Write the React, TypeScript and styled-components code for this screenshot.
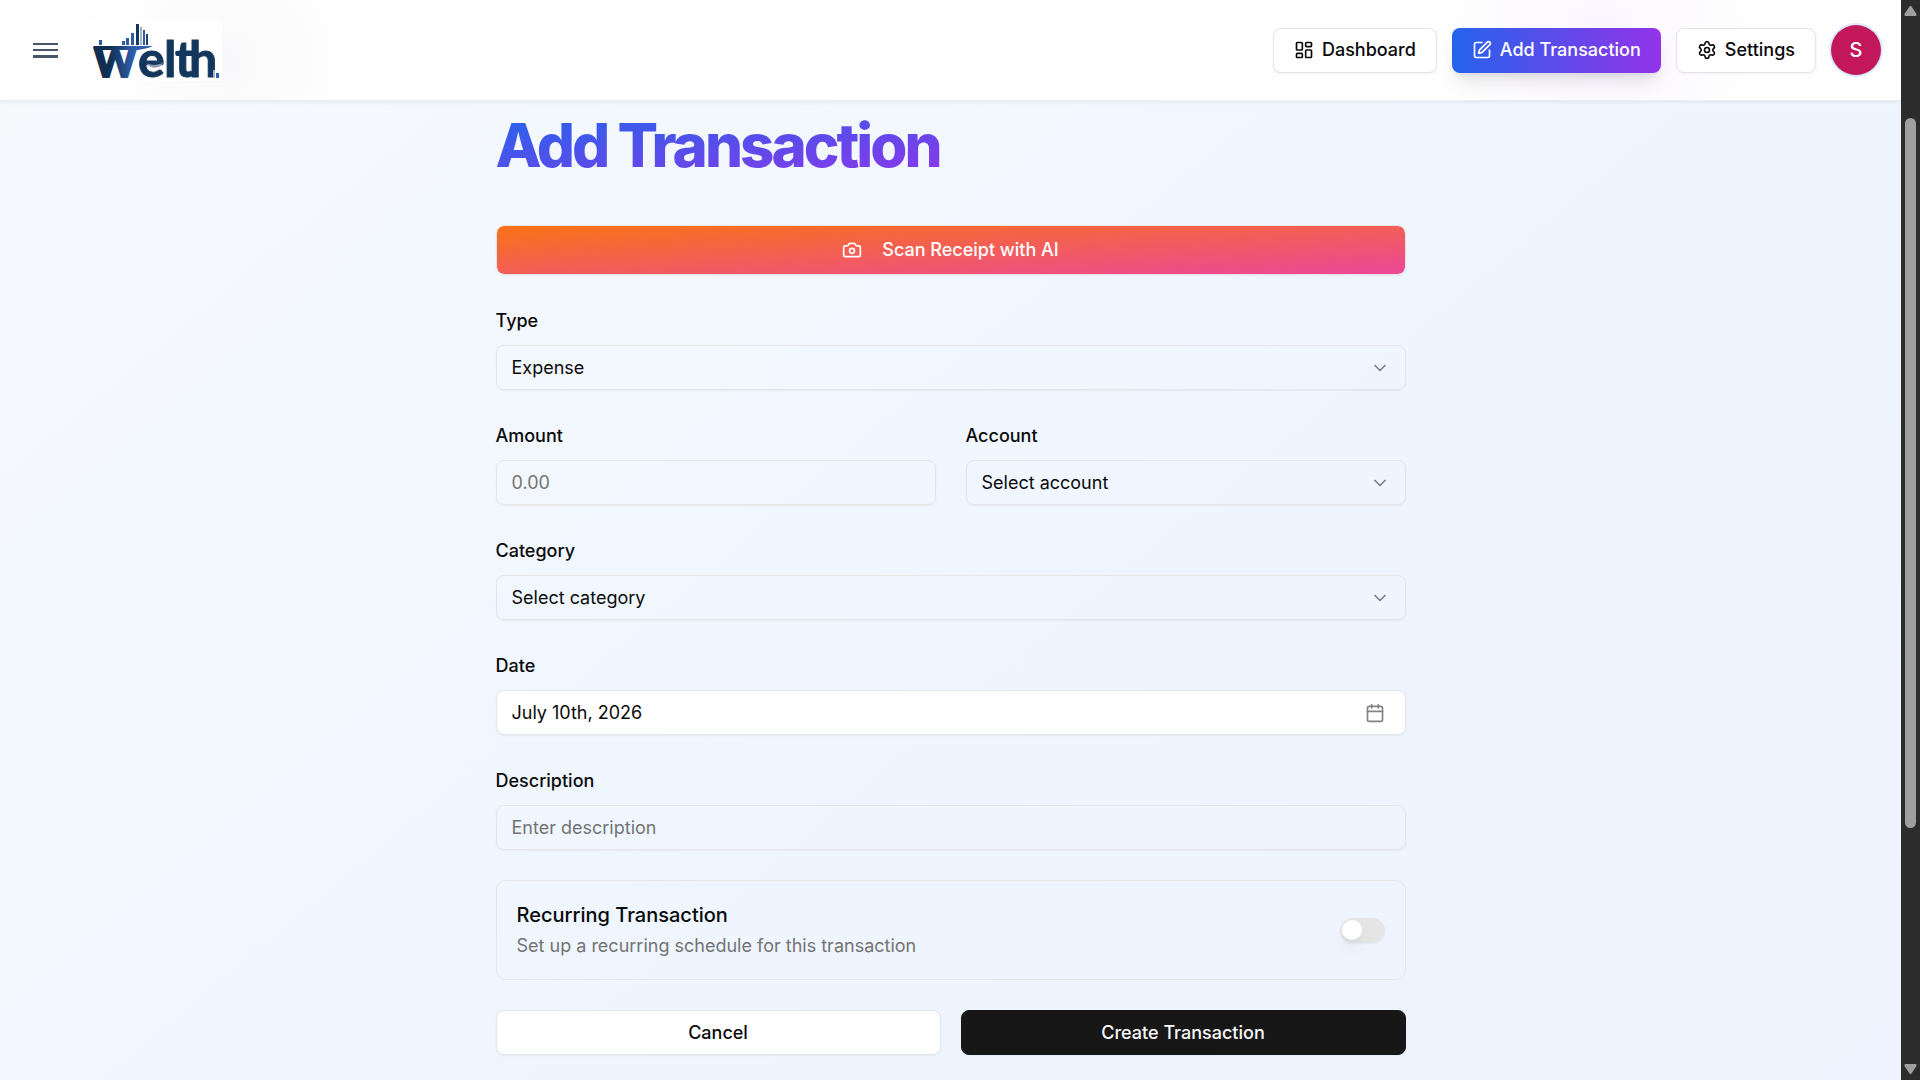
import React, { useState } from "react";
import styled, { createGlobalStyle, css } from "styled-components";
import { Calendar, Camera, ChevronDown, LayoutDashboard, Settings, SquarePen } from "lucide-react";

const GlobalStyle = createGlobalStyle`
  *, *::before, *::after { box-sizing: border-box; }
  body {
    margin: 0;
    font-family: Inter, "Liberation Sans", sans-serif;
    font-size: 18px;
    line-height: 30px;
    color: #0a0a0a;
    background: #2c2c2c;
  }
  button, input, select { font: inherit; color: inherit; margin: 0; }
  h1, h2, p { margin: 0; }
`;

const Window = styled.div`
  display: grid;
  grid-template-columns: minmax(0, 1fr) 19px;
  height: 100vh;
  overflow: hidden;
`;

const Page = styled.div`
  display: flex;
  flex-direction: column;
  overflow: hidden;
  background: linear-gradient(to bottom right, #f8fafc, #eff6ff, #eef2ff) 0 -150px / 100% 1590px no-repeat;
`;

const Header = styled.header`
  flex: none;
  border-bottom: 1px solid #e8edf4;
  box-shadow: 0 1px 4px rgba(15, 23, 42, 0.08);
  background:
    radial-gradient(circle at 230px 62px, rgba(248, 248, 250, 0.9), rgba(255, 255, 255, 0) 110px),
    radial-gradient(circle at 1600px 40px, rgba(250, 245, 255, 0.9), rgba(255, 255, 255, 0) 150px),
    #fefefe;
`;

const HeaderBar = styled.nav`
  display: flex;
  align-items: center;
  justify-content: space-between;
  height: 100px;
  padding: 0 20px 0 33px;
`;

const Group = styled.div<{ $gap: number }>`
  display: flex;
  align-items: center;
  gap: ${(p) => p.$gap}px;
`;

const MenuButton = styled.button`
  display: flex;
  padding: 0;
  border: 0;
  background: none;
  cursor: pointer;
`;

const LogoLink = styled.a`
  display: flex;
  background: #ffffff;
  svg { overflow: visible; }
`;

const control = css`
  height: 45px;
  border: 1px solid #e5e5e5;
  border-radius: 8px;
  box-shadow: 0 1px 2px rgba(0, 0, 0, 0.05);
`;

const NavLink = styled.a<{ $primary?: boolean }>`
  ${control}
  display: flex;
  align-items: center;
  gap: 8px;
  padding: 0 20px;
  font-weight: 500;
  color: #0a0a0a;
  text-decoration: none;
  background: #ffffff;
  ${(p) =>
    p.$primary &&
    css`
      border: 0;
      color: #ffffff;
      background: linear-gradient(to right, #2563eb, #9333ea);
      box-shadow: 0 12px 18px -4px rgba(0, 0, 0, 0.1), 0 5px 8px -5px rgba(0, 0, 0, 0.1);
    `}
`;

const Avatar = styled.button`
  width: 50px;
  height: 50px;
  padding: 0;
  border: 0;
  border-radius: 50%;
  background: #c2185b;
  color: #ffffff;
  font-size: 20px;
  font-weight: 500;
  box-shadow: 0 0 0 2px #dbeafe;
`;

const Main = styled.main`
  width: 100%;
  max-width: 960px;
  margin: 0 auto;
  padding: 14px 25px 25px;
`;

const Title = styled.h1`
  width: fit-content;
  margin-bottom: 40px;
  padding: 0 10px 10px 0;
  font-size: 60px;
  line-height: 60px;
  font-weight: 800;
  letter-spacing: -0.05em;
  color: transparent;
  background: linear-gradient(to bottom right, #2563eb, #9333ea);
  background-clip: text;
  -webkit-background-clip: text;
`;

const Form = styled.form`
  display: flex;
  flex-direction: column;
  gap: 30px;
`;

const Columns = styled.div<{ $gap: number }>`
  display: grid;
  grid-template-columns: 1fr 1fr;
  gap: ${(p) => p.$gap}px;
`;

const Field = styled.div`
  display: flex;
  flex-direction: column;
  gap: 8px;
`;

const Label = styled.label`
  line-height: 32px;
  font-weight: 500;
`;

const Input = styled.input`
  ${control}
  width: 100%;
  padding: 0 15px;
  background: transparent;
  &::placeholder { color: #737373; opacity: 1; }
`;

const SelectBox = styled.div`
  position: relative;
  display: flex;
  svg {
    position: absolute;
    right: 16px;
    top: 13px;
    opacity: 0.5;
    pointer-events: none;
  }
`;

const Select = styled.select`
  ${control}
  width: 100%;
  padding: 0 45px 0 15px;
  appearance: none;
  background: transparent;
`;

const DateButton = styled.button`
  ${control}
  display: flex;
  align-items: center;
  justify-content: space-between;
  width: 100%;
  padding: 0 20px 0 15px;
  background: #ffffff;
  svg { opacity: 0.5; }
`;

const ScanButton = styled.button`
  ${control}
  display: flex;
  align-items: center;
  justify-content: center;
  gap: 20px;
  width: 100%;
  height: 50px;
  font-weight: 500;
  color: #ffffff;
  background: linear-gradient(to bottom right, #f97316, #ec4899) padding-box;
`;

const Recurring = styled.div`
  display: flex;
  align-items: center;
  justify-content: space-between;
  height: 100px;
  padding: 0 20px;
  border: 1px solid #e5e5e5;
  border-radius: 10px;
`;

const RecurringText = styled.div`
  padding-top: 2px;
`;

const RecurringLabel = styled.label`
  display: block;
  font-size: 20px;
  font-weight: 500;
`;

const Hint = styled.p`
  line-height: 32px;
  color: #737373;
`;

const Switch = styled.input`
  appearance: none;
  display: flex;
  align-items: center;
  width: 45px;
  height: 25px;
  margin: 0;
  padding: 0 2px;
  border-radius: 13px;
  background: #e5e5e5;
  box-shadow: 0 1px 2px rgba(0, 0, 0, 0.05);
  cursor: pointer;
  &::before {
    content: "";
    width: 20px;
    height: 20px;
    border-radius: 50%;
    background: #ffffff;
    box-shadow: 0 12px 18px -4px rgba(0, 0, 0, 0.1), 0 5px 8px -5px rgba(0, 0, 0, 0.1);
  }
  &:checked { background: #171717; justify-content: flex-end; }
`;

const ActionButton = styled.button<{ $dark?: boolean }>`
  ${control}
  font-weight: 500;
  color: ${(p) => (p.$dark ? "#fafafa" : "#0a0a0a")};
  background: ${(p) => (p.$dark ? "#171717" : "#ffffff")};
  border-color: ${(p) => (p.$dark ? "#171717" : "#e5e5e5")};
`;

const ScrollTrack = styled.div`
  display: flex;
  flex-direction: column;
  align-items: center;
  padding: 5px 0;
  background: #2c2c2c;
`;

const ScrollLane = styled.div`
  flex: 1;
  width: 11px;
  padding-top: 102px;
`;

const ScrollThumb = styled.div`
  height: 75%;
  border-radius: 6px;
  background: #9f9f9f;
`;

function Logo() {
  return (
    <svg width="133" height="61" viewBox="0 0 133 61" role="img" aria-label="Welth">
      <defs>
        <linearGradient id="logo-blue" gradientUnits="userSpaceOnUse" x1="4" x2="58" y1="0" y2="0">
          <stop offset="0.3" stopColor="#0f2f52" />
          <stop offset="0.75" stopColor="#2f5fae" />
        </linearGradient>
      </defs>
      <g fill="#2f5c9e">
        <rect x="10" y="20" width="3" height="5" />
        <rect x="33" y="21" width="3" height="4" />
        <rect x="37" y="18" width="3" height="7" />
        <rect x="42" y="13" width="3" height="12" />
        <rect x="47" y="4" width="3" height="21" fill="#12365c" />
        <rect x="51" y="7" width="2" height="18" fill="#a9b1c6" />
        <rect x="54" y="10" width="2" height="15" />
        <rect x="57" y="14" width="2" height="11" fill="#1d4273" />
      </g>
      <path d="M4 26H64L59 28L49 30H7Z" fill="url(#logo-blue)" />
      <text
        x="5"
        y="57"
        fontFamily="Lato, sans-serif"
        fontWeight="900"
        fontSize="40"
        fill="url(#logo-blue)"
        stroke="url(#logo-blue)"
        strokeWidth="2"
      >
        W
      </text>
      <text
        x="49 75 86 100"
        y="57"
        fontFamily="Lato, sans-serif"
        fontWeight="700"
        fontSize="50"
        fill="#12365c"
        stroke="#12365c"
        strokeWidth="1"
      >
        elth
      </text>
      <path d="M58 44C63 41 69 41 74 43C71 49 62 49 58 44Z" fill="#8d9ab5" />
      <path d="M58 43C63 40 69 41 74 43C69 45 63 46 58 43Z" fill="#12365c" />
      <rect x="124" y="50" width="2" height="8" fill="#a9b1c6" />
      <rect x="127" y="53" width="3" height="5" fill="#2f5fae" />
    </svg>
  );
}

export default function App() {
  const [recurring, setRecurring] = useState(false);
  return (
    <>
      <GlobalStyle />
      <Window>
        <Page>
          <Header>
            <HeaderBar>
              <Group $gap={31}>
                <MenuButton type="button" aria-label="Open menu">
                  <svg width="25" height="15" viewBox="0 0 25 15" fill="#475569">
                    <rect width="25" height="2" />
                    <rect y="6" width="25" height="2" />
                    <rect y="12" width="25" height="3" />
                  </svg>
                </MenuButton>
                <LogoLink href="#">
                  <Logo />
                </LogoLink>
              </Group>
              <Group $gap={15}>
                <NavLink href="#dashboard">
                  <LayoutDashboard size={20} />
                  Dashboard
                </NavLink>
                <NavLink href="#add" $primary>
                  <SquarePen size={20} />
                  Add Transaction
                </NavLink>
                <NavLink href="#settings">
                  <Settings size={20} />
                  Settings
                </NavLink>
                <Avatar type="button">S</Avatar>
              </Group>
            </HeaderBar>
          </Header>
          <Main>
            <Title>Add Transaction</Title>
            <Form onSubmit={(e) => e.preventDefault()}>
              <ScanButton type="button">
                <Camera size={20} />
                Scan Receipt with AI
              </ScanButton>
              <Field>
                <Label htmlFor="type">Type</Label>
                <SelectBox>
                  <Select id="type">
                    <option>Expense</option>
                    <option>Income</option>
                  </Select>
                  <ChevronDown size={20} />
                </SelectBox>
              </Field>
              <Columns $gap={30}>
                <Field>
                  <Label htmlFor="amount">Amount</Label>
                  <Input id="amount" inputMode="decimal" placeholder="0.00" />
                </Field>
                <Field>
                  <Label htmlFor="account">Account</Label>
                  <SelectBox>
                    <Select id="account">
                      <option>Select account</option>
                    </Select>
                    <ChevronDown size={20} />
                  </SelectBox>
                </Field>
              </Columns>
              <Field>
                <Label htmlFor="category">Category</Label>
                <SelectBox>
                  <Select id="category">
                    <option>Select category</option>
                  </Select>
                  <ChevronDown size={20} />
                </SelectBox>
              </Field>
              <Field>
                <Label htmlFor="date">Date</Label>
                <DateButton id="date" type="button">
                  July 10th, 2026
                  <Calendar size={20} />
                </DateButton>
              </Field>
              <Field>
                <Label htmlFor="description">Description</Label>
                <Input id="description" placeholder="Enter description" />
              </Field>
              <Recurring>
                <RecurringText>
                  <RecurringLabel htmlFor="recurring">Recurring Transaction</RecurringLabel>
                  <Hint>Set up a recurring schedule for this transaction</Hint>
                </RecurringText>
                <Switch
                  id="recurring"
                  type="checkbox"
                  role="switch"
                  checked={recurring}
                  onChange={(e) => setRecurring(e.target.checked)}
                />
              </Recurring>
              <Columns $gap={20}>
                <ActionButton type="button">Cancel</ActionButton>
                <ActionButton type="submit" $dark>
                  Create Transaction
                </ActionButton>
              </Columns>
            </Form>
          </Main>
        </Page>
        <ScrollTrack aria-hidden="true">
          <svg width="13" height="11" viewBox="0 0 13 11" fill="#9f9f9f">
            <path d="M5.5 1.5Q6.5 0 7.5 1.5L12.5 9Q13 11 11.5 11H1.5Q0 11 .5 9Z" />
          </svg>
          <ScrollLane>
            <ScrollThumb />
          </ScrollLane>
          <svg width="13" height="11" viewBox="0 0 13 11" fill="#9f9f9f">
            <path d="M5.5 9.5Q6.5 11 7.5 9.5L12.5 2Q13 0 11.5 0H1.5Q0 0 .5 2Z" />
          </svg>
        </ScrollTrack>
      </Window>
    </>
  );
}
